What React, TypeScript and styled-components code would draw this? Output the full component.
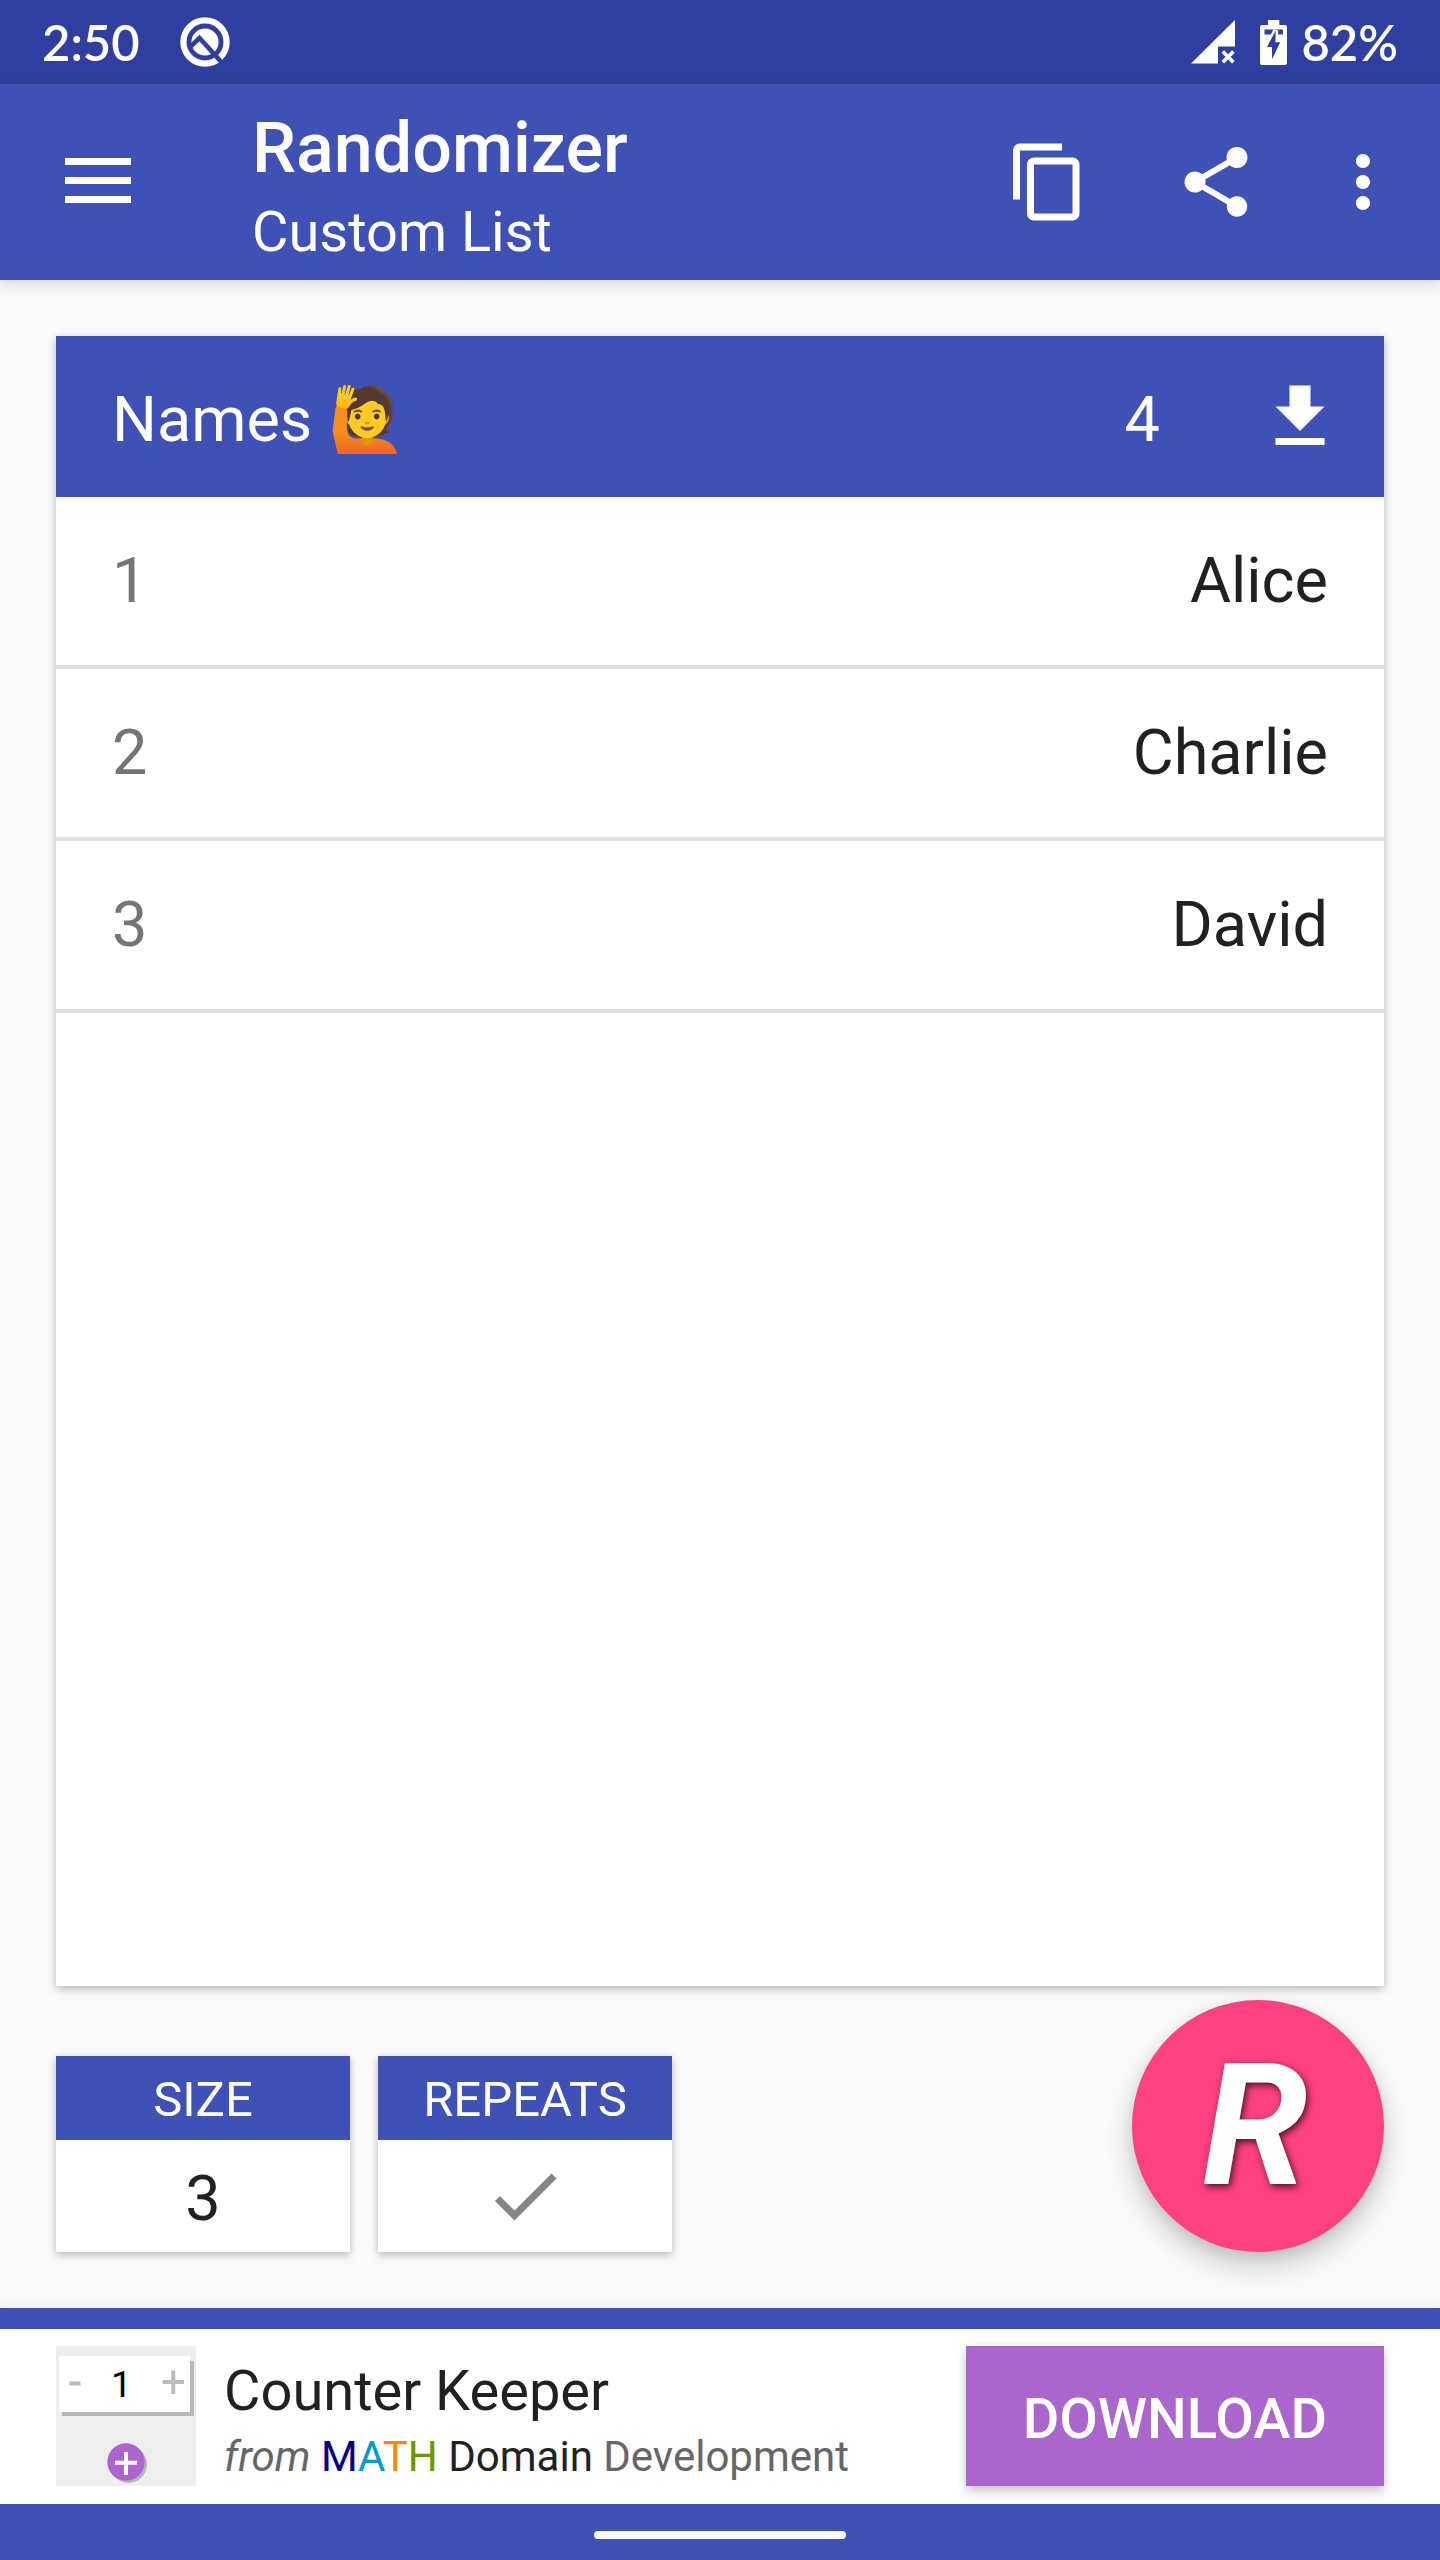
import React, { useState } from 'react';
import styled, { createGlobalStyle, css } from 'styled-components';

const color = {
  primary: '#3f51b5',
  primaryDark: '#303f9f',
  accent: '#ff4081',
  purple: '#aa66cc',
  page: '#fafafa',
  text: '#212121',
  muted: '#757575',
};

const GlobalStyle = createGlobalStyle`
  *, *::before, *::after { box-sizing: border-box; }
  body {
    margin: 0;
    background: ${color.page};
    font-family: Roboto, "Noto Sans", sans-serif;
    color: ${color.text};
  }
  button, input { font: inherit; color: inherit; }
`;

const raised = css`
  box-shadow: 0 4px 8px rgba(0, 0, 0, 0.2), 0 0 8px rgba(0, 0, 0, 0.08);
`;

const Screen = styled.div`
  display: flex;
  flex-direction: column;
  min-height: 100vh;
`;

const StatusBar = styled.div`
  display: flex;
  align-items: center;
  justify-content: space-between;
  height: 84px;
  padding: 0 42px;
  background: ${color.primaryDark};
  color: #fff;
  font-family: Lato, "Noto Sans", sans-serif;
  font-size: 49px;
  font-weight: 600;
  line-height: 56px;
`;

const StatusGroup = styled.div<{ $gap: number }>`
  display: flex;
  align-items: center;
  gap: ${(p) => p.$gap}px;
`;

const SystemIcons = styled.div`
  display: flex;
  align-items: center;
  gap: 25px;
`;

const AppBar = styled.header`
  display: flex;
  align-items: center;
  height: 196px;
  padding-right: 14px;
  background: ${color.primary};
  color: #fff;
  box-shadow: 0 4px 14px rgba(0, 0, 0, 0.15);
`;

const IconButton = styled.button<{ $width: number }>`
  display: flex;
  align-items: center;
  justify-content: center;
  width: ${(p) => p.$width}px;
  height: 168px;
  padding: 0;
  border: 0;
  background: none;
  cursor: pointer;
`;

const TitleBlock = styled.div`
  flex: 1;
  display: flex;
  flex-direction: column;
  gap: 8px;
  padding: 8px 0 0 56px;
`;

const Title = styled.h1`
  margin: 0;
  font-size: 70px;
  font-weight: 500;
  line-height: 84px;
`;

const Subtitle = styled.p`
  margin: 0;
  font-size: 56px;
  line-height: 68px;
`;

const Main = styled.main`
  flex: 1;
  display: flex;
  flex-direction: column;
  padding: 56px;
`;

const ResultCard = styled.section`
  flex: 1;
  background: #fff;
  ${raised}
`;

const ResultHeader = styled.div`
  display: flex;
  align-items: center;
  height: 161px;
  padding-left: 56px;
  background: ${color.primary};
  color: #fff;
  font-size: 63px;
  line-height: 74px;
`;

const ResultTitle = styled.h2`
  flex: 1;
  margin: 0;
  padding-top: 6px;
  font-size: inherit;
  font-weight: 400;
`;

const ResultCount = styled.span`
  padding: 6px 56px 0 0;
`;

const ResultList = styled.ol`
  margin: 0;
  padding: 0;
  list-style: none;
`;

const ResultRow = styled.li`
  display: flex;
  align-items: center;
  justify-content: space-between;
  height: 172px;
  padding: 0 56px;
  border-bottom: 4px solid #e0e0e0;
  font-size: 63px;
  line-height: 74px;
`;

const RowIndex = styled.span`
  color: ${color.muted};
`;

const Controls = styled.div`
  display: flex;
  align-items: flex-end;
  gap: 28px;
  padding-top: 14px;
`;

const Tile = styled.div`
  width: 294px;
  background: #fff;
  ${raised}
`;

const TileLabel = styled.label`
  display: block;
  height: 84px;
  padding-top: 2px;
  background: ${color.primary};
  color: #fff;
  font-size: 49px;
  line-height: 84px;
  text-align: center;
`;

const TileBody = styled.div`
  position: relative;
  display: flex;
  align-items: center;
  justify-content: center;
  height: 112px;
`;

const SizeInput = styled.input`
  width: 100%;
  height: 112px;
  padding: 4px 0 0;
  border: 0;
  outline: 0;
  background: none;
  font-size: 63px;
  line-height: 74px;
  text-align: center;
`;

const RepeatsBox = styled.input`
  position: absolute;
  inset: 0;
  margin: 0;
  appearance: none;
  cursor: pointer;
`;

const Fab = styled.button`
  width: 252px;
  height: 252px;
  margin-left: auto;
  padding: 0 6px 0 0;
  border: 0;
  border-radius: 50%;
  background: ${color.accent};
  color: #fff;
  font-size: 170px;
  font-style: italic;
  font-weight: 700;
  line-height: 252px;
  text-shadow: 2px 3px 7px rgba(0, 0, 0, 0.7);
  box-shadow: 0 14px 28px rgba(0, 0, 0, 0.2), 0 4px 14px rgba(0, 0, 0, 0.08);
  cursor: pointer;
`;

const Promo = styled.aside`
  display: flex;
  align-items: center;
  gap: 28px;
  padding: 17px 56px 18px;
  border-top: 21px solid ${color.primary};
  background: #fff;
  box-shadow: 0 0 14px rgba(0, 0, 0, 0.08);
`;

const PromoText = styled.div`
  flex: 1;
  display: flex;
  flex-direction: column;
  gap: 8px;
  padding-top: 8px;
`;

const PromoName = styled.strong`
  font-size: 56px;
  font-weight: 400;
  line-height: 66px;
`;

const PromoVendor = styled.span`
  color: #666;
  font-size: 42px;
  line-height: 50px;
`;

const Tint = styled.span<{ $c: string }>`
  color: ${(p) => p.$c};
`;

const DownloadButton = styled.button`
  height: 140px;
  padding: 6px 57px 0;
  border: 0;
  background: ${color.purple};
  color: #fff;
  font-size: 56px;
  font-weight: 500;
  line-height: 66px;
  box-shadow: 0 7px 10px rgba(0, 0, 0, 0.16), 0 0 8px rgba(0, 0, 0, 0.1);
  cursor: pointer;
`;

const NavBar = styled.footer`
  position: relative;
  display: flex;
  align-items: center;
  justify-content: center;
  height: 56px;
  padding-top: 6px;
  background: ${color.primary};
`;

const HomeHandle = styled.span`
  width: 252px;
  height: 8px;
  border-radius: 4px;
  background: #fff;
`;

const MaterialIcon = ({ d, fill = '#fff' }: { d: string; fill?: string }) => (
  <svg width="84" height="84" viewBox="0 0 24 24" fill={fill} aria-hidden="true">
    <path d={d} />
  </svg>
);

const icons = {
  copy: 'M16 1H4c-1.1 0-2 .9-2 2v14h2V3h12V1zm3 4H8c-1.1 0-2 .9-2 2v14c0 1.1.9 2 2 2h11c1.1 0 2-.9 2-2V7c0-1.1-.9-2-2-2zm0 16H8V7h11v14z',
  share:
    'M18 16.08c-.76 0-1.44.3-1.96.77L8.91 12.7c.05-.23.09-.46.09-.7s-.04-.47-.09-.7l7.05-4.11c.54.5 1.25.81 2.04.81 1.66 0 3-1.34 3-3s-1.34-3-3-3-3 1.34-3 3c0 .24.04.47.09.7L8.04 9.81C7.5 9.31 6.79 9 6 9c-1.66 0-3 1.34-3 3s1.34 3 3 3c.79 0 1.5-.31 2.04-.81l7.12 4.16c-.05.21-.08.43-.08.65 0 1.61 1.31 2.92 2.92 2.92s2.92-1.31 2.92-2.92-1.31-2.92-2.92-2.92z',
  more: 'M12 8c1.1 0 2-.9 2-2s-.9-2-2-2-2 .9-2 2 .9 2 2 2zm0 2c-1.1 0-2 .9-2 2s.9 2 2 2 2-.9 2-2-.9-2-2-2zm0 6c-1.1 0-2 .9-2 2s.9 2 2 2 2-.9 2-2-.9-2-2-2z',
  download: 'M19 9h-4V3H9v6H5l7 7 7-7zM5 18v2h14v-2H5z',
  check: 'M9 16.17L4.83 12l-1.42 1.41L9 19 21 7l-1.41-1.41z',
};

const MenuIcon = () => (
  <svg width="84" height="84" viewBox="0 0 84 84" fill="#fff" aria-hidden="true">
    <path d="M9 18h66v7H9zM9 37h66v7H9zM9 56h66v7H9z" />
  </svg>
);

const SystemBadge = () => (
  <svg width="50" height="50" viewBox="0 0 50 50" fill="none" aria-hidden="true">
    <circle cx="25" cy="25" r="21.6" stroke="#fff" strokeWidth="6.2" />
    <circle cx="25" cy="25" r="13.6" fill="#fff" />
    <path d="M9 31L19.5 21 45 49" stroke={color.primaryDark} strokeWidth="4.6" />
  </svg>
);

const SignalIcon = () => (
  <svg width="44" height="44" viewBox="0 0 44 44" aria-hidden="true">
    <path d="M0 43.5L44 0v26.5H27v17z" fill="#fff" />
    <path d="M31.8 31.6l10.6 10.6M42.4 31.6L31.8 42.2" stroke="#fff" strokeWidth="3.6" />
  </svg>
);

const BatteryIcon = () => (
  <svg width="27" height="45" viewBox="0 0 27 45" aria-hidden="true">
    <path d="M8 0h11.3v5H25a2 2 0 0 1 2 2v36a2 2 0 0 1-2 2H2a2 2 0 0 1-2-2V7a2 2 0 0 1 2-2h6z" fill="#fff" />
    <path d="M4.5 9.5H23v5H4.5z" fill={color.primaryDark} />
    <path d="M15.7 10.5L7 27h5v12.3l8.2-17H15.4z" fill={color.primaryDark} stroke="#fff" strokeWidth="5" />
    <path d="M15.7 10.5L7 27h5v12.3l8.2-17H15.4z" fill={color.primaryDark} />
  </svg>
);

const CounterLogo = () => (
  <svg width="140" height="140" viewBox="0 0 140 140" role="img" aria-label="Counter Keeper">
    <rect width="140" height="140" fill="#eee" />
    <path d="M6 15h132v55H6z" fill="#b7b7b7" />
    <path d="M3 10h131v56H3z" fill="#fff" />
    <path d="M13.5 35.5h11v4h-11zM106.5 34h21.5v4h-21.5zM115.3 24.5h4v23.5h-4z" fill="#bbb" />
    <text x="55" y="51" fontFamily="Roboto, sans-serif" fontSize="37" fontWeight="400" fill="#000">
      1
    </text>
    <circle cx="72.5" cy="118.5" r="18.5" fill="#b7b7b7" />
    <circle cx="70" cy="116" r="18.7" fill={color.purple} />
    <path d="M59 114.8h22v4H59zM68 106h4v23h-4z" fill="#fff" />
  </svg>
);

const names = ['Alice', 'Charlie', 'David'];

export default function App() {
  const [size, setSize] = useState('3');
  const [repeats, setRepeats] = useState(true);

  return (
    <Screen>
      <GlobalStyle />
      <StatusBar>
        <StatusGroup $gap={40}>
          <span>2:50</span>
          <SystemBadge />
        </StatusGroup>
        <StatusGroup $gap={14}>
          <SystemIcons>
            <SignalIcon />
            <BatteryIcon />
          </SystemIcons>
          <span>82%</span>
        </StatusGroup>
      </StatusBar>

      <AppBar>
        <IconButton $width={196} aria-label="Menu">
          <MenuIcon />
        </IconButton>
        <TitleBlock>
          <Title>Randomizer</Title>
          <Subtitle>Custom List</Subtitle>
        </TitleBlock>
        <IconButton $width={168} aria-label="Copy">
          <MaterialIcon d={icons.copy} />
        </IconButton>
        <IconButton $width={168} aria-label="Share">
          <MaterialIcon d={icons.share} />
        </IconButton>
        <IconButton $width={126} aria-label="More options">
          <MaterialIcon d={icons.more} />
        </IconButton>
      </AppBar>

      <Main>
        <ResultCard>
          <ResultHeader>
            <ResultTitle>Names 🙋</ResultTitle>
            <ResultCount>4</ResultCount>
            <IconButton $width={168} aria-label="Save list">
              <MaterialIcon d={icons.download} />
            </IconButton>
          </ResultHeader>
          <ResultList>
            {names.map((name, i) => (
              <ResultRow key={name}>
                <RowIndex>{i + 1}</RowIndex>
                <span>{name}</span>
              </ResultRow>
            ))}
          </ResultList>
        </ResultCard>

        <Controls>
          <Tile>
            <TileLabel htmlFor="size">SIZE</TileLabel>
            <TileBody>
              <SizeInput
                id="size"
                inputMode="numeric"
                value={size}
                onChange={(e) => setSize(e.target.value)}
              />
            </TileBody>
          </Tile>
          <Tile>
            <TileLabel htmlFor="repeats">REPEATS</TileLabel>
            <TileBody>
              {repeats && <MaterialIcon d={icons.check} fill="#858585" />}
              <RepeatsBox
                id="repeats"
                type="checkbox"
                checked={repeats}
                onChange={(e) => setRepeats(e.target.checked)}
              />
            </TileBody>
          </Tile>
          <Fab aria-label="Randomize">R</Fab>
        </Controls>
      </Main>

      <Promo>
        <CounterLogo />
        <PromoText>
          <PromoName>Counter Keeper</PromoName>
          <PromoVendor>
            <i>from</i> <Tint $c="#000080">M</Tint>
            <Tint $c="#0099cc">A</Tint>
            <Tint $c="#ff8800">T</Tint>
            <Tint $c="#669900">H</Tint> <Tint $c={color.text}>Domain</Tint> Development
          </PromoVendor>
        </PromoText>
        <DownloadButton>DOWNLOAD</DownloadButton>
      </Promo>
      <NavBar>
        <HomeHandle />
      </NavBar>
    </Screen>
  );
}
